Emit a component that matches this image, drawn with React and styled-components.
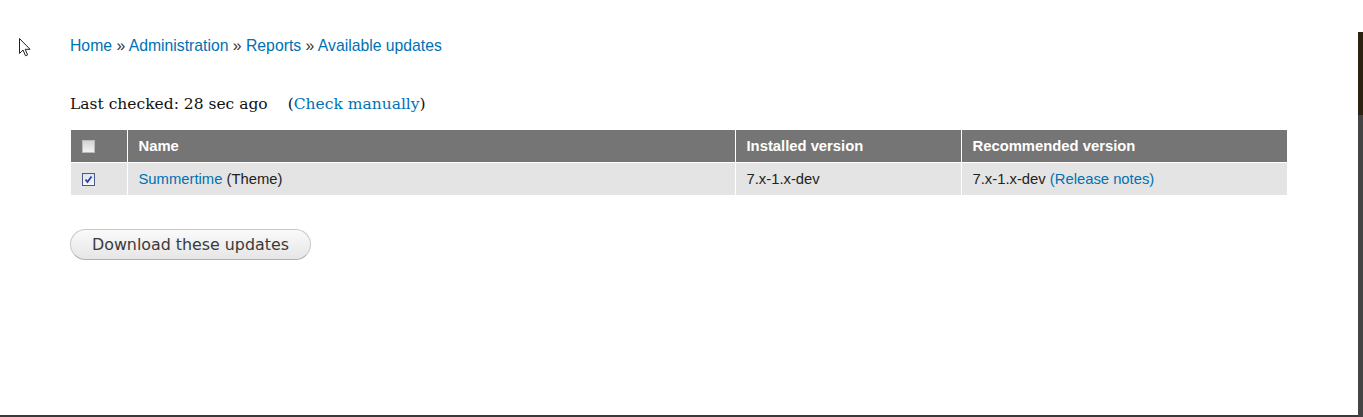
import React from 'react';
import styled, { createGlobalStyle } from 'styled-components';

const GlobalStyle = createGlobalStyle`
  html, body {
    margin: 0;
    padding: 0;
    background: #fff;
  }
  body {
    font-family: 'Liberation Sans', Arial, sans-serif;
    overflow: hidden;
  }
`;

const Screen = styled.div`
  display: flex;
  width: 1363px;
  height: 417px;
  position: relative;
`;

const Main = styled.main`
  flex: 1;
  height: 417px;
  box-sizing: border-box;
  border-bottom: 2px solid #3a3a3a;
  padding: 35px 0 0 70px;
`;

const SideStrip = styled.div`
  width: 5px;
  margin-top: 32px;
  background: linear-gradient(#2b2212 0, #2b2212 83px, #444 83px, #444 100%);
`;

const Cursor = styled.svg`
  position: absolute;
  left: 19px;
  top: 38px;
`;

const Breadcrumb = styled.nav`
  font-size: 15.75px;
  line-height: 22px;
  color: #333;
  a {
    color: #0071b3;
    text-decoration: none;
  }
`;

const Checked = styled.p`
  font-family: 'DejaVu Serif', 'Liberation Serif', serif;
  font-size: 15.5px;
  line-height: 22px;
  color: #111;
  margin: 36px 0 0;
  display: flex;
  gap: 20px;
  a {
    color: #0071b3;
    text-decoration: none;
  }
`;

const Table = styled.table`
  margin: 15px 0 0 1px;
  width: 1216px;
  border-collapse: collapse;
  font-size: 14.8px;
`;

const Th = styled.th`
  background: #757575;
  color: #fff;
  font-weight: bold;
  text-align: left;
  height: 32px;
  padding: 0 11px;
  border-right: 1px solid #fff;
  border-bottom: 1px solid #fff;
  width: ${p => p.$w}px;
  box-sizing: border-box;
  &:last-child { border-right: 0; }
`;

const Td = styled.td`
  background: #e4e4e4;
  color: #222;
  height: 32px;
  padding: 0 11px;
  border-right: 1px solid #fff;
  &:last-child { border-right: 0; }
  a {
    color: #0071b3;
    text-decoration: none;
  }
`;

const Box = styled.span`
  display: inline-block;
  vertical-align: middle;
  width: 11px;
  height: 11px;
  border: 1px solid ${p => (p.$checked ? '#4a5a8a' : '#bbb')};
  background: ${p => (p.$checked ? 'linear-gradient(#dfe4ee, #f6f7fb)' : 'linear-gradient(#d4d4d4, #f2f2f2)')};
  position: relative;
  svg { position: absolute; left: 1px; top: 1px; }
`;

function Checkbox({ checked }) {
  return (
    <Box $checked={checked}>
      {checked && (
        <svg width="9" height="9" viewBox="0 0 9 9">
          <path d="M1.5 4.5 L3.5 7 L7.5 1.5" fill="none" stroke="#2b3fae" strokeWidth="1.8" />
        </svg>
      )}
    </Box>
  );
}

const Button = styled.button`
  margin-top: 34px;
  height: 31px;
  padding: 0 21px;
  border: 1px solid #c8c8c8;
  border-bottom-color: #b0b0b0;
  border-radius: 16px;
  background: linear-gradient(#fafafa, #e6e6e6);
  color: #3a3a3a;
  font-family: 'DejaVu Sans', 'Liberation Sans', sans-serif;
  font-size: 15.85px;
`;

export default function App() {
  return (
    <Screen>
      <GlobalStyle />
      <Main>
        <Breadcrumb>
          <a href="/">Home</a> » <a href="/admin">Administration</a> » <a href="/admin/reports">Reports</a> » <a href="/admin/reports/updates">Available updates</a>
        </Breadcrumb>
        <Checked>
          <span>Last checked: 28 sec ago</span>
          <span>(<a href="/check">Check manually</a>)</span>
        </Checked>
        <Table>
          <thead>
            <tr>
              <Th $w={56}><Checkbox /></Th>
              <Th $w={608}>Name</Th>
              <Th $w={226}>Installed version</Th>
              <Th>Recommended version</Th>
            </tr>
          </thead>
          <tbody>
            <tr>
              <Td><Checkbox checked /></Td>
              <Td><a href="/summertime">Summertime</a> (Theme)</Td>
              <Td>7.x-1.x-dev</Td>
              <Td>7.x-1.x-dev <a href="/notes">(Release notes)</a></Td>
            </tr>
          </tbody>
        </Table>
        <Button>Download these updates</Button>
      </Main>
      <SideStrip />
      <Cursor width="13" height="19" viewBox="0 0 13 19">
        <path d="M0.5 0.5 L0.5 15.5 L4 12 L6.5 17.8 L8.6 16.9 L6.2 11.3 L11 11.3 Z" fill="#fff" stroke="#222" strokeWidth="1" strokeLinejoin="miter" />
      </Cursor>
    </Screen>
  );
}
